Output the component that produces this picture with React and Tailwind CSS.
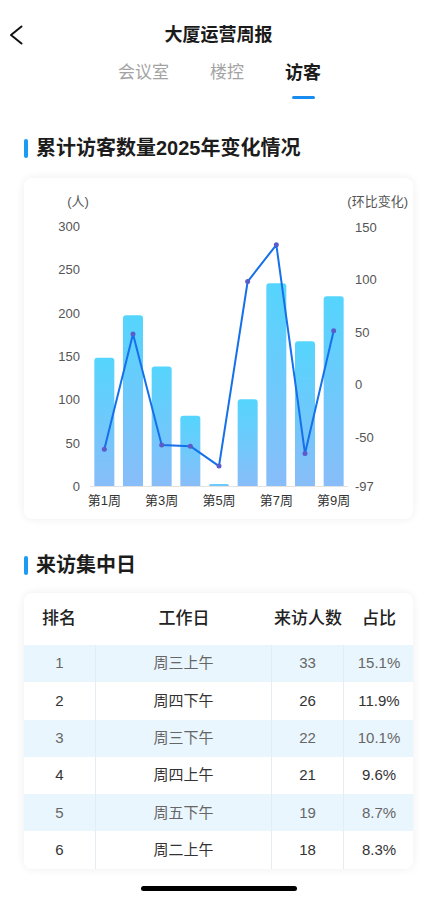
import React from 'react';

const FONT = '"Liberation Sans", "Noto Sans CJK SC", sans-serif';

const bars = [148, 197, 138, 81, 2.3, 100, 234, 167, 219];
const rates = [-62, 48, -58, -59, -78, 98, 133, -66, 51];

const leftTicks = [0, 50, 100, 150, 200, 250, 300];
const rightTicks = [150, 100, 50, 0, -50, -97];

const rows = [
  { rank: 1, day: '周三上午', count: 33, pct: '15.1%' },
  { rank: 2, day: '周四下午', count: 26, pct: '11.9%' },
  { rank: 3, day: '周三下午', count: 22, pct: '10.1%' },
  { rank: 4, day: '周四上午', count: 21, pct: '9.6%' },
  { rank: 5, day: '周五下午', count: 19, pct: '8.7%' },
  { rank: 6, day: '周二上午', count: 18, pct: '8.3%' },
];

// chart geometry, in card coordinates
const X0 = 66;
const X1 = 324;
const BAND = (X1 - X0) / 9;
const BASE = 308;
const TOP = 48;
const barY = (v) => BASE - (v * (BASE - TOP)) / 300;
const rateY = (v) => BASE - ((v + 97) * (BASE - 49)) / 247;
const cx = (i) => X0 + BAND * (i + 0.5);

const barPath = (x, y, w, h) => {
  const r = Math.min(3, h);
  return `M${x},${y + h} L${x},${y + r} Q${x},${y} ${x + r},${y} L${x + w - r},${y} Q${x + w},${y} ${x + w},${y + r} L${x + w},${y + h} Z`;
};

const SectionTitle = ({ children }) => (
  <div className="flex items-center h-[28px] pl-[24px]">
    <span className="w-[4px] h-[19px] rounded-full bg-[#1a9bf4]"></span>
    <span className="ml-[8px] text-[20px] font-bold text-[#1c1c1c] leading-[28px]">{children}</span>
  </div>
);

const Chart = () => (
  <svg width="389" height="341" viewBox="0 0 389 341" style={{ fontFamily: FONT }}>
    <defs>
      <linearGradient id="barFill" x1="0" y1="0" x2="0" y2="1">
        <stop offset="0%" stopColor="#55d5fd" />
        <stop offset="100%" stopColor="#88bdf9" />
      </linearGradient>
    </defs>
    <text x="54" y="28" fontSize="13" fill="#555" textAnchor="middle">(人)</text>
    <text x="384" y="28" fontSize="13" fill="#555" textAnchor="end">(环比变化)</text>
    {leftTicks.map((t) => (
      <text key={t} x="56" y={barY(t) + 5} fontSize="13" fill="#555" textAnchor="end">{t}</text>
    ))}
    {rightTicks.map((t) => (
      <text key={t} x="331" y={rateY(t) + 5} fontSize="13" fill="#555">{t}</text>
    ))}
    <line x1={X0} y1={BASE + 0.5} x2={X1} y2={BASE + 0.5} stroke="#e2e2e2" strokeWidth="1" />
    {bars.map((v, i) => {
      const y = barY(v);
      return <path key={i} d={barPath(cx(i) - 10, y, 20, BASE - y)} fill="url(#barFill)" />;
    })}
    <polyline
      points={rates.map((v, i) => `${cx(i)},${rateY(v)}`).join(' ')}
      fill="none"
      stroke="#1670ea"
      strokeWidth="2"
      strokeLinejoin="round"
    />
    {rates.map((v, i) => (
      <circle key={i} cx={cx(i)} cy={rateY(v)} r="2.5" fill="#5b5cc9" />
    ))}
    {[0, 2, 4, 6, 8].map((i) => (
      <text key={i} x={cx(i)} y="327" fontSize="13" fill="#333" textAnchor="middle">{`第${i + 1}周`}</text>
    ))}
  </svg>
);

const App = () => {
  return (
    <div className="w-[437px] h-[900px] bg-white overflow-hidden" style={{ fontFamily: FONT }}>
      {/* header */}
      <div className="relative h-[30px] mt-[20px] flex items-center justify-center">
        <svg className="absolute left-[6px] top-[4px]" width="22" height="22" viewBox="0 0 22 22">
          <polyline points="15.5,2.5 5,11 15.5,19.5" fill="none" stroke="#111" strokeWidth="2" strokeLinecap="round" strokeLinejoin="round" />
        </svg>
        <span className="text-[18px] font-bold text-[#1a1a1a] leading-[30px]">大厦运营周报</span>
      </div>

      {/* tabs */}
      <div className="mt-[11px] flex justify-center items-start gap-[41px] pl-[2px]">
        <span className="text-[17px] leading-[24px] text-[#a3a3a3]">会议室</span>
        <span className="text-[17px] leading-[24px] text-[#a3a3a3]">楼控</span>
        <div className="flex flex-col items-center">
          <span className="text-[18px] leading-[24px] font-bold text-[#1a1a1a]">访客</span>
          <span className="mt-[11px] w-[23px] h-[3px] rounded-full bg-[#1a8cf0]"></span>
        </div>
      </div>

      <div className="mt-[35px]">
        <SectionTitle>累计访客数量2025年变化情况</SectionTitle>
      </div>

      <div className="mt-[16px] mx-[24px] h-[341px] rounded-lg bg-white shadow-[0_0_10px_rgba(0,0,0,0.07)] overflow-hidden">
        <Chart />
      </div>

      <div className="mt-[32px]">
        <SectionTitle>来访集中日</SectionTitle>
      </div>

      {/* table */}
      <div className="mt-[14px] mx-[24px] rounded-lg bg-white shadow-[0_0_10px_rgba(0,0,0,0.07)] overflow-hidden">
        <div className="grid grid-cols-[72px_176px_72px_70px] h-[52px] items-center text-[17px] text-[#222] font-medium">
          <span className="text-center pr-[2px]">排名</span>
          <span className="text-center">工作日</span>
          <span className="text-center">来访人数</span>
          <span className="text-center">占比</span>
        </div>
        {rows.map((r, i) => (
          <div
            key={r.rank}
            className={`grid grid-cols-[72px_176px_72px_70px] h-[37.3px] text-[15px] ${i % 2 === 0 ? 'bg-[#eaf6fd] text-[#666]' : 'bg-white text-[#333]'}`}
          >
            <span className="flex items-center justify-center border-r border-[#e4edf2]">{r.rank}</span>
            <span className="flex items-center justify-center border-r border-[#e4edf2]">{r.day}</span>
            <span className="flex items-center justify-center border-r border-[#e4edf2]">{r.count}</span>
            <span className="flex items-center justify-center">{r.pct}</span>
          </div>
        ))}
      </div>

      {/* home indicator */}
      <div className="mt-[17px] flex justify-center">
        <span className="w-[156px] h-[5px] rounded-full bg-black"></span>
      </div>
    </div>
  );
};

export default App;
